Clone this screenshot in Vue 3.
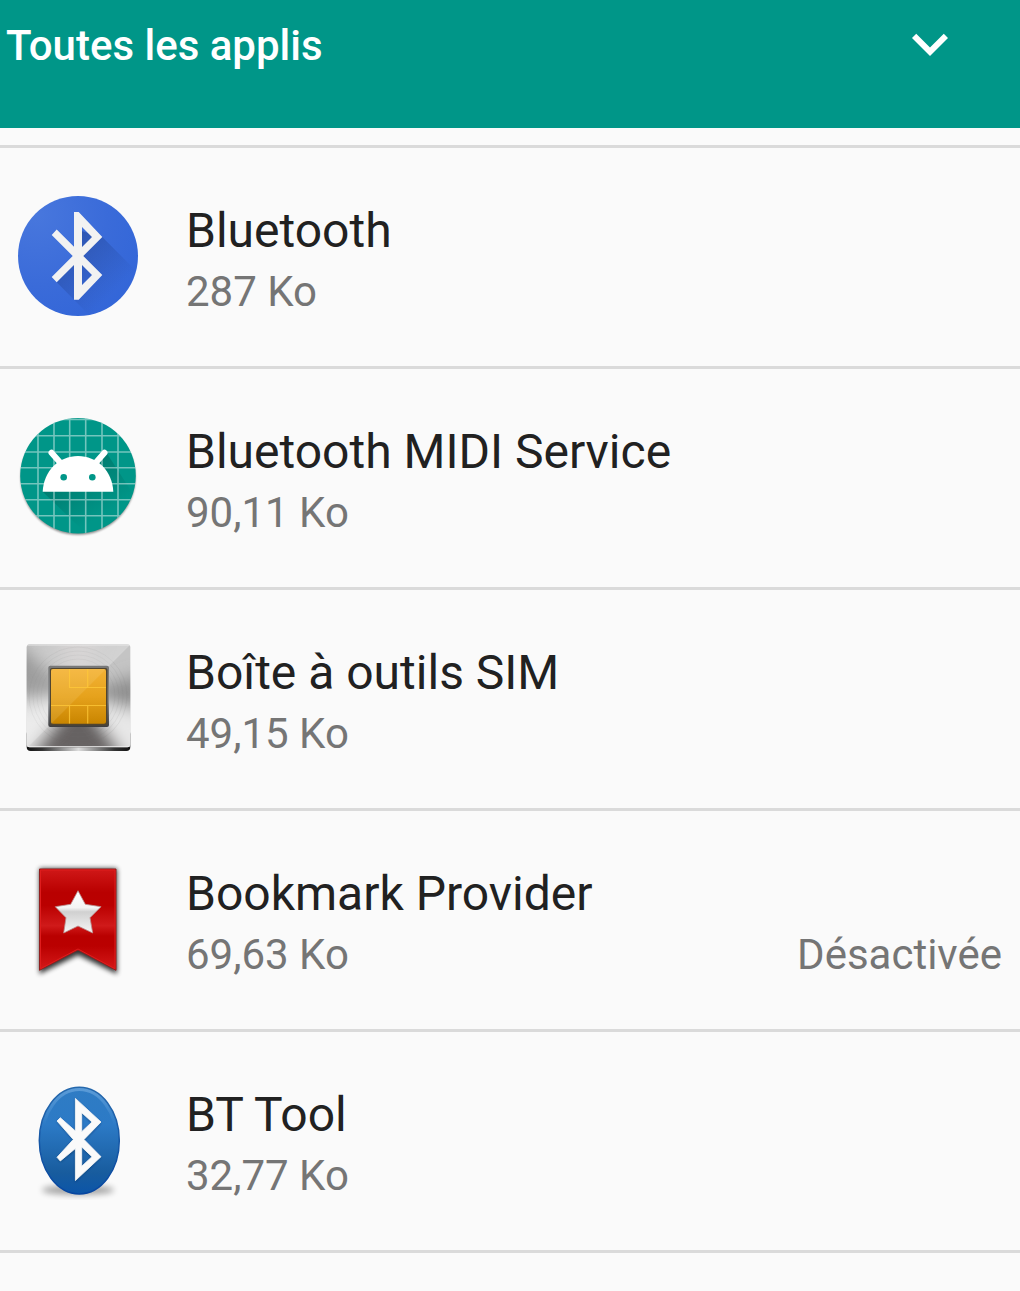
<script setup>
import { ref } from 'vue'

const filter = ref('all')
const apps = [
  { icon: 'bluetooth', name: 'Bluetooth', size: '287 Ko' },
  { icon: 'android', name: 'Bluetooth MIDI Service', size: '90,11 Ko' },
  { icon: 'sim', name: 'Boîte à outils SIM', size: '49,15 Ko' },
  { icon: 'bookmark', name: 'Bookmark Provider', size: '69,63 Ko', status: 'Désactivée' },
  { icon: 'bttool', name: 'BT Tool', size: '32,77 Ko' },
]
</script>

<template>
  <div class="page">
    <header class="bar">
      <select v-model="filter" class="filter" aria-label="Toutes les applis">
        <option value="all">Toutes les applis</option>
      </select>
      <svg class="chevron" viewBox="0 0 24 24" aria-hidden="true">
        <path d="M7.41 8.59L12 13.17l4.59-4.58L18 10l-6 6-6-6z" fill="#fff" />
      </svg>
    </header>

    <ul class="list">
      <li v-for="app in apps" :key="app.name" class="row">
        <svg v-if="app.icon === 'bluetooth'" class="icon" viewBox="0 0 120 120" aria-hidden="true">
          <defs>
            <radialGradient id="bt-bg" cx="0.15" cy="0.15" r="1">
              <stop offset="0" stop-color="#4877dd" />
              <stop offset="0.6" stop-color="#3a6bd9" />
              <stop offset="1" stop-color="#3366d8" />
            </radialGradient>
            <linearGradient id="bt-shade" gradientUnits="userSpaceOnUse" x1="50" y1="50" x2="96" y2="96">
              <stop offset="0" stop-color="#1f3f8c" stop-opacity="0.5" />
              <stop offset="1" stop-color="#1f3f8c" stop-opacity="0" />
            </linearGradient>
            <clipPath id="bt-clip"><circle cx="60" cy="60" r="60" /></clipPath>
          </defs>
          <circle cx="60" cy="60" r="60" fill="url(#bt-bg)" />
          <g clip-path="url(#bt-clip)">
            <path d="M60 34L84.300 41L130 87V130H82L38.700 86.300L60 60Z" fill="url(#bt-shade)" />
          </g>
          <path
            fill="#f2f2f2"
            fill-rule="evenodd"
            d="M56 16h4.700L84.300 41 65.300 60 84.300 79 60.700 103.700H56V69L38.700 86.300 33.700 81 54.700 60 33.700 39l5-5.500L56 50.700ZM64 31v20l10-10ZM64 69v20l10-10Z"
          />
        </svg>

        <svg v-else-if="app.icon === 'android'" class="icon" viewBox="0 0 120 120" aria-hidden="true">
          <defs>
            <clipPath id="an-clip"><circle cx="60" cy="58.700" r="57.800" /></clipPath>
            <linearGradient id="an-shade" gradientUnits="userSpaceOnUse" x1="55" y1="55" x2="82" y2="100">
              <stop offset="0" stop-color="#00554b" stop-opacity="0.4" />
              <stop offset="1" stop-color="#00554b" stop-opacity="0" />
            </linearGradient>
            <filter id="an-blur" x="-10%" y="-10%" width="120%" height="120%">
              <feGaussianBlur stdDeviation="1" />
            </filter>
          </defs>
          <circle cx="60" cy="60.500" r="57.300" fill="#000" opacity="0.45" filter="url(#an-blur)" />
          <circle cx="60" cy="58.700" r="57.800" fill="#009688" />
          <g clip-path="url(#an-clip)">
            <path d="M24.700 74.700L82 130H130V100L88 35Z" fill="url(#an-shade)" />
            <path
              d="M20 0V120M36 0V120M51.700 0V120M67.700 0V120M84 0V120M100 0V120M0 18.700H120M0 35H120M0 50.700H120M0 66.700H120M0 82.700H120M0 98.700H120M0 2.500H120"
              stroke="#fff"
              stroke-opacity="0.45"
              stroke-width="1.600"
            />
          </g>
          <path d="M33.500 35.800L43 46.500M86.500 35.800L77 46.500" stroke="#fff" stroke-width="6" stroke-linecap="round" />
          <path d="M24.700 74.700C25.500 54 41 39 60 39S94.500 54 95.300 74.700Z" fill="#fff" />
          <circle cx="45.700" cy="60.300" r="3.300" fill="#009688" />
          <circle cx="74.300" cy="60.300" r="3.300" fill="#009688" />
        </svg>

        <svg v-else-if="app.icon === 'sim'" class="icon" viewBox="0 0 120 120" aria-hidden="true">
          <defs>
            <clipPath id="sim-clip"><rect x="8.700" y="6.300" width="103.600" height="103" rx="3" /></clipPath>
            <linearGradient id="sim-lip">
              <stop offset="0" stop-color="#111" />
              <stop offset="0.15" stop-color="#333" />
              <stop offset="0.5" stop-color="#ddd" />
              <stop offset="0.85" stop-color="#333" />
              <stop offset="1" stop-color="#111" />
            </linearGradient>
            <linearGradient id="sim-gold" x1="0" y1="0" x2="0" y2="1">
              <stop offset="0" stop-color="#f3b235" />
              <stop offset="0.5" stop-color="#e6a21c" />
              <stop offset="1" stop-color="#c98500" />
            </linearGradient>
            <linearGradient id="sim-frame" x1="0" y1="0" x2="0" y2="1">
              <stop offset="0" stop-color="#777" />
              <stop offset="0.6" stop-color="#85888c" />
              <stop offset="1" stop-color="#3d3d40" />
            </linearGradient>
            <linearGradient id="sim-shine" x1="0" y1="0" x2="1" y2="1">
              <stop offset="0" stop-color="#fff" stop-opacity="0.05" />
              <stop offset="0.5" stop-color="#fff" stop-opacity="0.25" />
            </linearGradient>
            <filter id="sim-blur" x="-40%" y="-40%" width="180%" height="180%">
              <feGaussianBlur stdDeviation="8" />
            </filter>
          </defs>
          <rect x="8.700" y="92" width="103.600" height="21" rx="4" fill="url(#sim-lip)" />
          <g clip-path="url(#sim-clip)">
            <rect x="8" y="6" width="105" height="104" fill="#c4c4c4" />
            <g filter="url(#sim-blur)">
              <path d="M60 58L-15 -5V60Z" fill="#909090" />
              <path d="M60 58L35 -10H85Z" fill="#cfcccc" />
              <path d="M60 58L125 35V72Z" fill="#8f8f8f" />
              <path d="M60 58L-15 72V115L18 125Z" fill="#e6e6e6" />
              <path d="M60 56L8 122H110Z" fill="#666262" />
              <path d="M64 58L112 125H130V78Z" fill="#e8e8e8" />
            </g>
            <g fill="none" stroke="#777" stroke-opacity="0.1">
              <circle cx="60" cy="58" r="37" />
              <circle cx="60" cy="58" r="41" />
              <circle cx="60" cy="58" r="45" />
              <circle cx="60" cy="58" r="49" />
            </g>
            <path d="M8 6H113L8 111Z" fill="url(#sim-shine)" />
            <path d="M9 7H112M9 108.500H112" stroke="#eee" stroke-opacity="0.8" />
          </g>
          <rect x="30.300" y="27.700" width="60.700" height="61.300" rx="2" fill="url(#sim-frame)" />
          <rect x="32" y="30" width="57.500" height="57.500" rx="2" fill="#51452f" />
          <rect x="33" y="31" width="55" height="54.700" rx="2" fill="url(#sim-gold)" />
          <path d="M33 31H88L33 86Z" fill="#ffe3a0" fill-opacity="0.15" />
          <path
            d="M51.500 31V49.500H88M69.700 31V49.500M33 67.500H88M51.500 67.500V85.500M69.700 67.500V85.500"
            fill="none"
            stroke="#ffca3a"
            stroke-opacity="0.75"
            stroke-width="1.200"
          />
        </svg>

        <svg v-else-if="app.icon === 'bookmark'" class="icon" viewBox="0 0 120 120" aria-hidden="true">
          <defs>
            <linearGradient id="bm-red" x1="0" y1="0" x2="0" y2="1">
              <stop offset="0" stop-color="#d01818" />
              <stop offset="0.23" stop-color="#b90000" />
              <stop offset="0.36" stop-color="#ba0000" />
              <stop offset="0.56" stop-color="#d01a1a" />
              <stop offset="0.66" stop-color="#b90000" />
              <stop offset="0.76" stop-color="#ba0000" />
              <stop offset="1" stop-color="#d51a1a" />
            </linearGradient>
            <linearGradient id="bm-star" x1="0" y1="0" x2="0" y2="1">
              <stop offset="0" stop-color="#fff" />
              <stop offset="0.4" stop-color="#f4f4f4" />
              <stop offset="0.5" stop-color="#d0d0d0" />
              <stop offset="1" stop-color="#f6f6f6" />
            </linearGradient>
            <filter id="bm-blur" x="-20%" y="-20%" width="140%" height="140%">
              <feGaussianBlur stdDeviation="2.400" />
            </filter>
          </defs>
          <path d="M21.500 9.500H99V115L60 96L21.500 115Z" fill="#000" opacity="0.8" filter="url(#bm-blur)" />
          <path d="M21.500 10H98V111.300L60 91L21.500 111.300Z" fill="url(#bm-red)" stroke="#8e2020" />
          <path d="M22.500 11H97V109.700L60 90L22.500 109.700Z" fill="none" stroke="#e01c1c" />
          <path
            d="M60 31.700L67.300 45.300 83 47.700 72 58.700 74.700 74 60 67 45.700 74 48 58.700 37.300 47.700 52.700 45.300Z"
            fill="url(#bm-star)"
            stroke="#b89090"
            stroke-width="0.800"
          />
        </svg>

        <svg v-else class="icon" viewBox="0 0 120 120" aria-hidden="true">
          <defs>
            <linearGradient id="tl-blue" x1="0" y1="0" x2="0" y2="1">
              <stop offset="0" stop-color="#2f7cc4" />
              <stop offset="0.35" stop-color="#2c7ac6" />
              <stop offset="0.8" stop-color="#185c9e" />
              <stop offset="1" stop-color="#0b55a8" />
            </linearGradient>
            <linearGradient id="tl-rim" x1="0" y1="0" x2="0" y2="1">
              <stop offset="0" stop-color="#2568ac" />
              <stop offset="1" stop-color="#0646a0" />
            </linearGradient>
            <linearGradient id="tl-gloss" x1="0" y1="0" x2="0" y2="1">
              <stop offset="0" stop-color="#8fc0ee" stop-opacity="0.45" />
              <stop offset="0.35" stop-color="#8fc0ee" stop-opacity="0" />
            </linearGradient>
            <filter id="tl-blur" x="-30%" y="-150%" width="160%" height="400%">
              <feGaussianBlur stdDeviation="3" />
            </filter>
            <filter id="tl-soft" x="-20%" y="-20%" width="140%" height="140%">
              <feGaussianBlur stdDeviation="1" />
            </filter>
          </defs>
          <ellipse cx="60" cy="110" rx="36" ry="5" fill="#000" opacity="0.35" filter="url(#tl-blur)" />
          <ellipse cx="61.300" cy="60.600" rx="40" ry="53.300" fill="url(#tl-blue)" stroke="url(#tl-rim)" stroke-width="1.500" />
          <ellipse cx="61.300" cy="60.600" rx="37.500" ry="51" fill="none" stroke="url(#tl-gloss)" stroke-width="3" />
          <path
            fill="#0b3566"
            fill-opacity="0.6"
            fill-rule="evenodd"
            filter="url(#tl-soft)"
            d="M57 19L83 43 66 60.700 83 77.700 57 102V71L42.300 82 39 78.300 55.300 60 39 41.700 42.300 38.700 57 52ZM63.700 33.700V52.700L74 43ZM63.700 68V87.300L74 77.700Z"
          />
          <path
            fill="#fafafa"
            stroke="#fafafa"
            stroke-width="0.800"
            stroke-linejoin="round"
            fill-rule="evenodd"
            d="M57.400 18.400L83 42 66 59.500 83 76.700 57.400 100.600V68.500L42.300 81 39 77.300 55.300 59.500 39 41 42.300 37.700 57.400 51ZM63.700 32.700V51.700L74 42ZM63.700 67V86.300L74 76.700Z"
          />
        </svg>

        <div class="text">
          <div class="name">{{ app.name }}</div>
          <div class="details">
            <span>{{ app.size }}</span>
            <span v-if="app.status">{{ app.status }}</span>
          </div>
        </div>
      </li>
    </ul>
  </div>
</template>

<style>
body {
  margin: 0;
  background: #fafafa;
}
</style>

<style scoped>
.page {
  min-height: 100vh;
  background: #fafafa;
  font-family: Roboto, "Noto Sans", sans-serif;
}
.bar {
  display: grid;
  align-items: start;
  box-sizing: border-box;
  min-height: 128px;
  padding: 8px 54px 0 6px;
  background: #009688;
}
.filter,
.chevron {
  grid-area: 1 / 1;
}
.filter {
  appearance: none;
  width: 100%;
  height: 76px;
  margin: 0;
  padding: 0;
  border: 0;
  background: transparent;
  color: #fff;
  font-family: inherit;
  font-size: 42px;
  font-weight: 500;
  line-height: 48px;
}
.chevron {
  justify-self: end;
  width: 72px;
  height: 72px;
  pointer-events: none;
}
.list {
  margin: 17px 0 0;
  padding: 0;
  list-style: none;
}
.row {
  display: flex;
  align-items: flex-start;
  gap: 48px;
  padding: 48px 18px 50px;
  border-top: 3px solid #dadada;
}
.row:last-child {
  border-bottom: 3px solid #dadada;
}
.icon {
  flex: none;
  width: 120px;
  height: 120px;
}
.text {
  flex: 1;
  min-width: 0;
  padding-top: 7px;
}
.name {
  color: #212121;
  font-size: 48px;
  line-height: 56px;
}
.details {
  display: flex;
  justify-content: space-between;
  margin-top: 9px;
  color: #757575;
  font-size: 42px;
  line-height: 48px;
}
</style>
